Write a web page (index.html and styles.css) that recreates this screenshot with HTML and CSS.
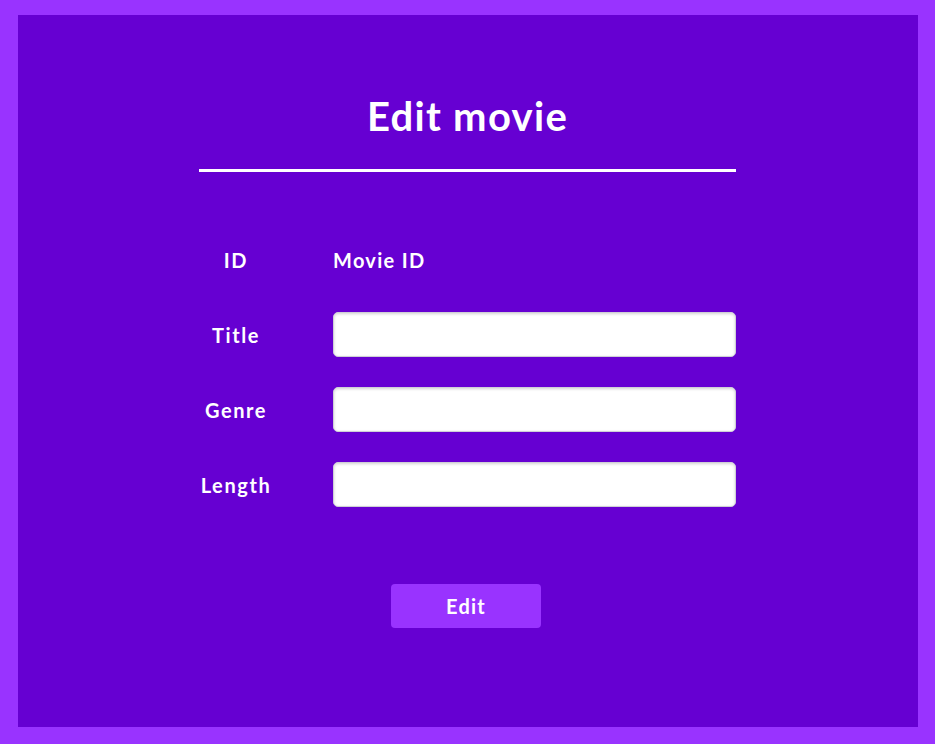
FILE: index.html
```html
<!DOCTYPE html>
<html lang="en">
<head>
<meta charset="utf-8">
<title>Edit movie</title>
<link rel="stylesheet" href="styles.css">
</head>
<body>
<main class="panel">
  <div class="content">
    <h1 class="heading">Edit movie</h1>
    <hr class="divider">
    <form class="form">
      <div class="row">
        <span class="label">ID</span>
        <span class="value">Movie ID</span>
      </div>
      <div class="row">
        <label class="label" for="title">Title</label>
        <input class="field" id="title" type="text">
      </div>
      <div class="row">
        <label class="label" for="genre">Genre</label>
        <input class="field" id="genre" type="text">
      </div>
      <div class="row">
        <label class="label" for="length">Length</label>
        <input class="field" id="length" type="text">
      </div>
      <div class="actions">
        <button class="btn" type="button">Edit</button>
      </div>
    </form>
  </div>
</main>
</body>
</html>
```
FILE: styles.css
```css
html, body {
  margin: 0;
  padding: 0;
}
body {
  background: #9933ff;
  padding: 15px 17px 17px 18px;
  font-family: "Lato", "Open Sans", sans-serif;
  color: #ffffff;
}
.panel {
  background: #6600d2;
  height: 712px;
  box-sizing: border-box;
  padding: 77px 0 0 181px;
}
.content {
  width: 537px;
}
.heading {
  margin: 0;
  font-size: 40px;
  line-height: 48px;
  font-weight: 700;
  text-align: center;
  letter-spacing: 1.3px;
}
.divider {
  margin: 29px 0 0 0;
  border: 0;
  height: 3px;
  background: #ffffff;
}
.form {
  margin-top: 65px;
}
.row {
  display: grid;
  grid-template-columns: 74px 1fr;
  column-gap: 60px;
  align-items: center;
  height: 45px;
  margin-bottom: 30px;
}
.label {
  text-align: center;
  font-size: 20px;
  font-weight: 700;
  letter-spacing: 1.6px;
}
.value {
  font-size: 20px;
  font-weight: 700;
  letter-spacing: 1.3px;
}
.field {
  box-sizing: border-box;
  width: 403px;
  height: 45px;
  margin: 0;
  border: 1px solid #cfcfd6;
  border-radius: 5px;
  background: #ffffff;
  box-shadow: inset 0 1px 3px rgba(0, 0, 0, 0.18);
}
.actions {
  display: flex;
  justify-content: center;
  margin-top: 77px;
  padding-right: 3px;
}
.btn {
  width: 150px;
  height: 44px;
  border: 0;
  border-radius: 4px;
  background: #9933ff;
  color: #ffffff;
  font-family: "Lato", "Open Sans", sans-serif;
  font-size: 20px;
  font-weight: 700;
  letter-spacing: 1.2px;
  cursor: pointer;
}
```
